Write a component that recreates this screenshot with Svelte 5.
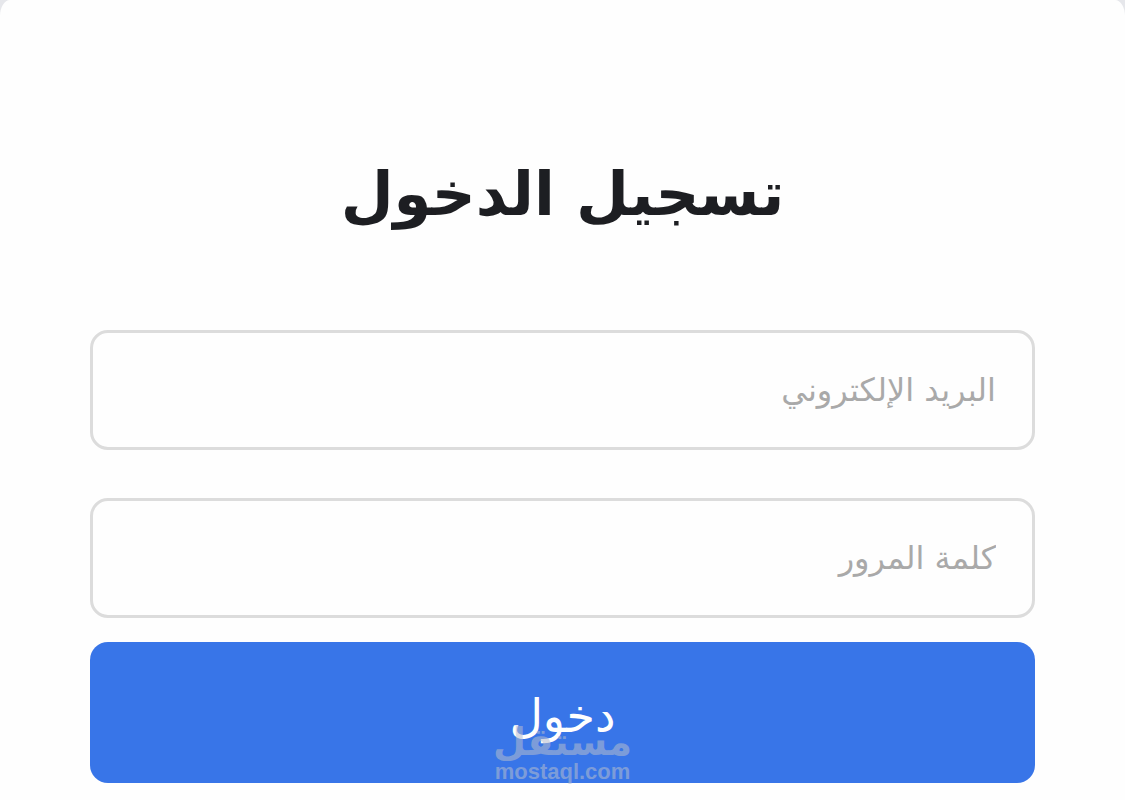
<script>
  let email = $state('')
  let password = $state('')

  function submit(e) {
    e.preventDefault()
  }
</script>

<main class="card" dir="rtl" lang="ar">
  <h1>تسجيل الدخول</h1>

  <form onsubmit={submit}>
    <input type="email" dir="rtl" placeholder="البريد الإلكتروني" aria-label="البريد الإلكتروني" bind:value={email} />
    <input type="password" dir="rtl" placeholder="كلمة المرور" aria-label="كلمة المرور" bind:value={password} />

    <div class="action">
      <button type="submit">دخول</button>
      <div class="watermark">
        <span class="brand">مستقل</span>
        <span class="domain" dir="ltr">mostaql.com</span>
      </div>
    </div>
  </form>
</main>

<style>
  :global(body) { margin: 0; background: #e6e7eb; }

  .card {
    box-sizing: border-box; min-height: 100vh;
    padding: 142px 90px 17px;
    background: #fefefe; border-radius: 10px 10px 0 0 / 16px 16px 0 0;
    font-family: "DejaVu Sans", sans-serif;
  }

  h1 {
    margin: 0 0 84px; text-align: center;
    color: #1d1e22; font-size: 61px; line-height: 104px; font-weight: 700;
  }

  form { display: flex; flex-direction: column; }

  input {
    box-sizing: border-box; width: 100%; height: 120px;
    margin: 0 0 48px; padding: 0 36px;
    border: 3px solid #dcdcdc; border-radius: 18px;
    background: #fefefe; color: #1d1e22;
    font-family: inherit; font-size: 32px; outline: none;
  }
  input[type="password"] { margin-bottom: 24px; }
  input::placeholder { color: #a9a9a9; opacity: 1; }
  input:focus { border-color: #3875e8; }

  .action { position: relative; }

  button {
    display: block; width: 100%; height: 141px;
    padding: 6px 0 0; border: none; border-radius: 18px;
    background: #3875e8; color: #fefefe;
    font-family: inherit; font-size: 46px; cursor: pointer;
  }
  button:hover { background: #2f69d8; }

  .watermark {
    position: absolute; left: 0; right: 0; bottom: 0;
    display: flex; flex-direction: column; align-items: center;
    color: #b4bccd; opacity: 0.55; font-weight: 700; pointer-events: none;
  }
  .brand { font-size: 38px; line-height: 38px; }
  .domain { font-family: "Liberation Sans", Arial, sans-serif; font-size: 22px; line-height: 22px; }
</style>
